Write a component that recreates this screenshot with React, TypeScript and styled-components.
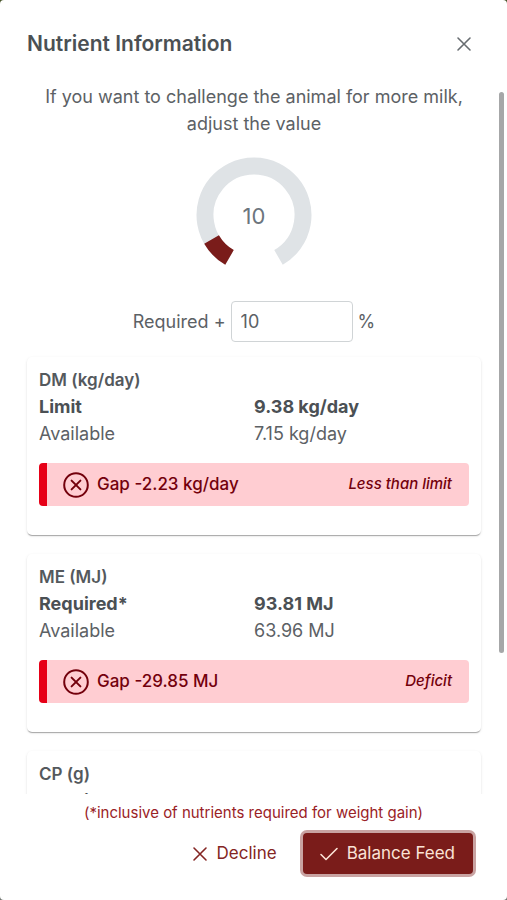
import React, { useEffect, useRef, useState } from "react";
import styled, { createGlobalStyle } from "styled-components";

const GlobalStyle = createGlobalStyle`
  * { box-sizing: border-box; }
  body {
    margin: 0;
    background: linear-gradient(#46542a, #70746f);
    font-family: Inter, "Liberation Sans", sans-serif;
    font-size: 18px;
    line-height: 27px;
    color: #5c6165;
  }
  button, input { font: inherit; }
  h2, h3, p, dl, dd, dt { margin: 0; }
`;

const Dialog = styled.section`
  display: flex;
  flex-direction: column;
  height: 100vh;
  background: #fff;
  border-radius: 4px;
  overflow: hidden;
`;

const Header = styled.header`
  display: flex;
  flex: none;
  align-items: center;
  justify-content: space-between;
  padding: 27px 27px 22px;
`;

const Title = styled.h2`
  font-size: 21px;
  line-height: 34px;
  font-weight: 600;
  color: #4b5054;
`;

const CloseButton = styled.button`
  display: flex;
  align-items: center;
  justify-content: center;
  width: 32px;
  height: 32px;
  padding: 0;
  border: 0;
  background: none;
  color: #686d71;
  cursor: pointer;
`;

const Body = styled.div`
  position: relative;
  flex: 1;
  min-height: 0;
`;

const Scroller = styled.div`
  height: 100%;
  overflow-y: auto;
  padding: 0 26px 44px 27px;
  scrollbar-width: none;
`;

const Track = styled.div`
  position: absolute;
  inset: 9px 3px 0 auto;
  width: 5px;
`;

const Thumb = styled.div`
  position: absolute;
  width: 100%;
  border-radius: 3px;
  background: #a6a7a8;
`;

const Intro = styled.p`
  padding: 0 16px;
  text-align: center;
`;

const Gauge = styled.svg`
  display: block;
  width: 122px;
  height: 122px;
  margin: 17px auto 25px;
`;

const GaugeText = styled.text`
  font-size: 22px;
  fill: #6c757d;
  text-anchor: middle;
`;

const Adjust = styled.label`
  display: flex;
  align-items: center;
  justify-content: center;
  gap: 5px;
  margin-bottom: 15px;
`;

const PercentInput = styled.input`
  width: 122px;
  height: 41px;
  padding: 0 9px;
  border: 1px solid #d0d4d6;
  border-radius: 4px;
  color: #5c6165;
  background: #fff;
`;

const Cards = styled.div`
  display: flex;
  flex-direction: column;
  gap: 19px;
`;

const Card = styled.article`
  padding: 10px 12px 29px;
  border-radius: 5px;
  box-shadow: 0 2px 1px -1px rgba(0, 0, 0, 0.22), 0 1px 1px rgba(0, 0, 0, 0.1), 0 1px 3px rgba(0, 0, 0, 0.1);
`;

const CardTitle = styled.h3`
  font-size: 17px;
  line-height: 26px;
  font-weight: 600;
  color: #54595d;
`;

const Row = styled.dl<{ $strong?: boolean }>`
  display: grid;
  grid-template-columns: 1fr 1fr;
  font-weight: ${(p) => (p.$strong ? 700 : 400)};
  color: ${(p) => (p.$strong ? "#4b5054" : "#5c6165")};
`;

const Alert = styled.div`
  display: flex;
  align-items: center;
  height: 43px;
  margin-top: 16px;
  padding: 0 17px 0 16px;
  border-left: 8px solid #e60017;
  border-radius: 4px;
  background: #ffcdd2;
  color: #73000c;
  font-weight: 500;
`;

const GapText = styled.span`
  margin-left: 8px;
  font-size: 17px;
`;

const Status = styled.em`
  margin-left: auto;
  font-size: 15px;
  line-height: 24px;
  padding-bottom: 2px;
`;

const Footer = styled.footer`
  flex: none;
  padding: 8px 34px 26px;
`;

const Note = styled.p`
  font-size: 15px;
  line-height: 22px;
  text-align: center;
  color: #9a2226;
`;

const Actions = styled.div`
  display: flex;
  justify-content: flex-end;
  gap: 8px;
  margin-top: 9px;
`;

const ActionButton = styled.button<{ $primary?: boolean }>`
  display: flex;
  align-items: center;
  gap: 8px;
  height: 41px;
  padding: 0 18px 0 16px;
  font-size: 17px;
  border: 0;
  border-radius: 4px;
  cursor: pointer;
  color: ${(p) => (p.$primary ? "#fbe3d6" : "#842523")};
  background: ${(p) => (p.$primary ? "#7a1c1a" : "transparent")};
  box-shadow: ${(p) => (p.$primary ? "0 0 0 3px #c9a3a2" : "none")};
`;

const Icon = styled.svg`
  display: block;
  flex: none;
  fill: none;
  stroke: currentColor;
  stroke-linecap: round;
  stroke-linejoin: round;
`;

function CrossIcon() {
  return (
    <Icon width="18" height="18" viewBox="0 0 18 18" strokeWidth="1.6" aria-hidden="true">
      <path d="M3 3 15 15M15 3 3 15" />
    </Icon>
  );
}

function CheckIcon() {
  return (
    <Icon width="20" height="18" viewBox="0 0 20 18" strokeWidth="1.6" aria-hidden="true">
      <path d="M2 9.5 7 14.5 18 3.5" />
    </Icon>
  );
}

function CircleCrossIcon() {
  return (
    <Icon width="26" height="26" viewBox="0 0 26 26" strokeWidth="2" aria-hidden="true">
      <circle cx="13" cy="13" r="11.8" />
      <path d="M8.6 8.6 17.4 17.4M17.4 8.6 8.6 17.4" />
    </Icon>
  );
}

function arcPoint(fraction: number) {
  const angle = ((240 - 300 * fraction) * Math.PI) / 180;
  return `${61 + 49 * Math.cos(angle)} ${61 - 49 * Math.sin(angle)}`;
}

function Knob({ value }: { value: number }) {
  const share = Math.min(Math.max(value, 0), 100) / 100;
  const large = share > 0.6 ? 1 : 0;
  return (
    <Gauge viewBox="0 0 122 122" role="img" aria-label={`${value} percent`}>
      <path d={`M${arcPoint(0)}A49 49 0 1 1 ${arcPoint(1)}`} fill="none" stroke="#dfe3e6" strokeWidth="17" />
      <path d={`M${arcPoint(0)}A49 49 0 ${large} 1 ${arcPoint(share)}`} fill="none" stroke="#7a1c1a" strokeWidth="17" />
      <GaugeText x="61" y="70">{value}</GaugeText>
    </Gauge>
  );
}

const nutrients = [
  { name: "DM (kg/day)", target: "Limit", amount: "9.38 kg/day", available: "7.15 kg/day", gap: "Gap -2.23 kg/day", status: "Less than limit" },
  { name: "ME (MJ)", target: "Required*", amount: "93.81 MJ", available: "63.96 MJ", gap: "Gap -29.85 MJ", status: "Deficit" },
  { name: "CP (g)", target: "Required*", amount: "886.33 g", available: "702.18 g", gap: "Gap -184.15 g", status: "Deficit" },
];

export default function App() {
  const [value, setValue] = useState("10");
  const scroller = useRef<HTMLDivElement>(null);
  const [thumb, setThumb] = useState({ top: 0, height: 79 });

  const measure = () => {
    const el = scroller.current;
    if (el) {
      setThumb({
        top: (el.scrollTop / el.scrollHeight) * 100,
        height: (el.clientHeight / el.scrollHeight) * 100,
      });
    }
  };

  useEffect(() => {
    measure();
    window.addEventListener("resize", measure);
    return () => window.removeEventListener("resize", measure);
  }, []);

  return (
    <>
      <GlobalStyle />
      <Dialog role="dialog" aria-labelledby="dialog-title">
        <Header>
          <Title id="dialog-title">Nutrient Information</Title>
          <CloseButton type="button" aria-label="Close">
            <CrossIcon />
          </CloseButton>
        </Header>
        <Body>
          <Scroller ref={scroller} onScroll={measure}>
            <Intro>If you want to challenge the animal for more milk, adjust the value</Intro>
            <Knob value={Number(value) || 0} />
            <Adjust>
              <span>Required +</span>
              <PercentInput inputMode="numeric" value={value} onChange={(e) => setValue(e.target.value)} />
              <span>%</span>
            </Adjust>
            <Cards>
              {nutrients.map((n) => (
                <Card key={n.name}>
                  <CardTitle>{n.name}</CardTitle>
                  <Row $strong>
                    <dt>{n.target}</dt>
                    <dd>{n.amount}</dd>
                  </Row>
                  <Row>
                    <dt>Available</dt>
                    <dd>{n.available}</dd>
                  </Row>
                  <Alert>
                    <CircleCrossIcon />
                    <GapText>{n.gap}</GapText>
                    <Status>{n.status}</Status>
                  </Alert>
                </Card>
              ))}
            </Cards>
          </Scroller>
          <Track aria-hidden="true">
            <Thumb style={{ top: `${thumb.top}%`, height: `${thumb.height}%` }} />
          </Track>
        </Body>
        <Footer>
          <Note>(*inclusive of nutrients required for weight gain)</Note>
          <Actions>
            <ActionButton type="button">
              <CrossIcon />
              Decline
            </ActionButton>
            <ActionButton type="button" $primary>
              <CheckIcon />
              Balance Feed
            </ActionButton>
          </Actions>
        </Footer>
      </Dialog>
    </>
  );
}
